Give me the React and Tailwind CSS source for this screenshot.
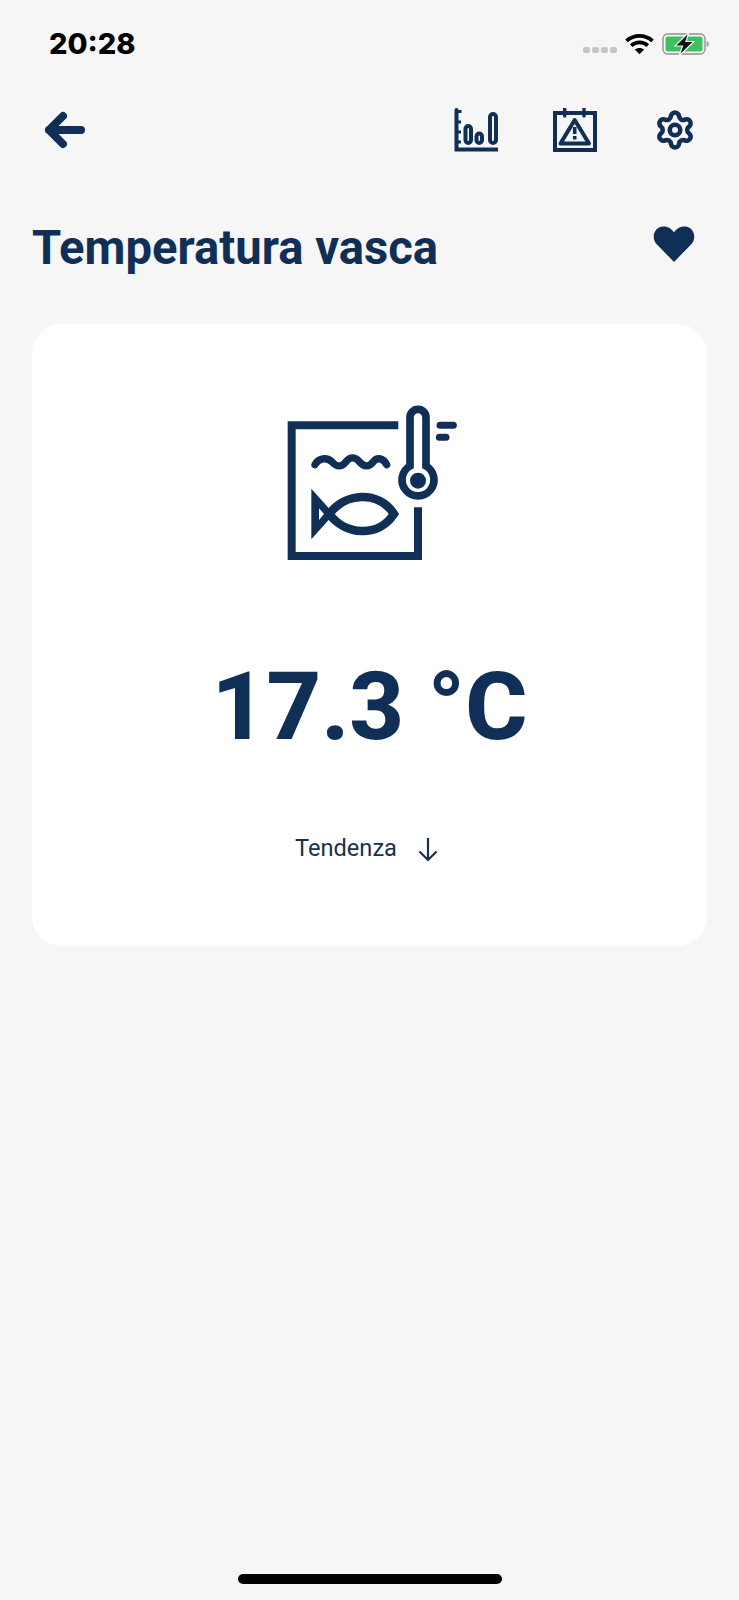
import { Settings } from 'lucide-react'

function Wifi() {
  return (
    <svg width="29" height="22" viewBox="0 0 28 21" fill="none" stroke="#000" strokeWidth="3.6">
      <path d="M1.5 7.5C8.5 1 19.5 1 26.5 7.5" />
      <path d="M6 12C10.5 8 17.5 8 22 12" />
      <path d="M14 20.5L9.5 15.8C12 13.8 16 13.8 18.5 15.8Z" fill="#000" stroke="none" />
    </svg>
  )
}

function Battery() {
  return (
    <svg width="48" height="24" viewBox="0 0 48 24" fill="none">
      <rect x="1" y="2" width="42" height="20" rx="5" stroke="#a9a9a9" strokeWidth="1.8" />
      <rect x="3.5" y="4.5" width="37" height="15" rx="2.5" fill="#3cc060" />
      <path d="M44.5 9C46.5 9.5 47 10.5 47 12S46.5 14.5 44.5 15Z" fill="#a9a9a9" />
      <path d="M27 0L13 14H20.5L17 24L32 9.5H24Z" fill="#111" stroke="#f6f6f6" strokeWidth="1.2" />
    </svg>
  )
}

function ChartIcon() {
  return (
    <svg width="44" height="44" viewBox="0 0 44 44" fill="none" stroke="#0f2f57" strokeWidth="4">
      <path d="M2.5 2V41.5H43" strokeWidth="4" strokeLinecap="round" />
      <path d="M3 3.5H7.5M3 14H7M3 24H7M3 34H7" strokeWidth="3" />
      <rect x="11.5" y="18" width="5.5" height="17" rx="2.7" />
      <rect x="22.5" y="25.5" width="5.5" height="9.5" rx="2.7" />
      <rect x="36" y="6" width="6" height="29" rx="3" />
    </svg>
  )
}

function AlertCalendarIcon() {
  return (
    <svg width="44" height="44" viewBox="0 0 44 44" fill="none" stroke="#0f2f57">
      <rect x="2" y="5" width="40" height="37" strokeWidth="4" />
      <path d="M11.7 0.5V8M31 0.5V8" strokeWidth="3.4" strokeLinecap="round" />
      <path d="M21.7 12L7.5 35.5H36Z" strokeWidth="4" strokeLinejoin="round" />
      <path d="M21.7 19V26" strokeWidth="3.6" />
      <path d="M21.7 28V31.5" strokeWidth="3.6" />
    </svg>
  )
}

function TankIcon() {
  return (
    <svg width="200" height="180" viewBox="0 0 600 540" fill="none" stroke="#0f2f57">
      <path d="M385 106H65V498H444V352" strokeWidth="24" />
      <path d="M420 228V82a24 24 0 0 1 48 0V228A48 48 0 1 1 420 228Z" strokeWidth="23" />
      <circle cx="444" cy="272" r="24" fill="#0f2f57" stroke="none" />
      <path d="M510 106H550" strokeWidth="21" strokeLinecap="round" />
      <path d="M508 142H528" strokeWidth="21" strokeLinecap="round" />
      <path d="M135 224C145 205 170 200 185 215C200 232 215 232 228 215C240 200 255 200 268 215C282 232 297 232 310 215C322 200 340 205 350 224" strokeWidth="22" strokeLinecap="round" />
      <path d="M178 372C225 308 325 300 372 372C325 444 225 436 178 372Z" strokeWidth="26" />
      <path fillRule="evenodd" d="M124 296L192 372L124 448ZM147 355V390L162 372Z" fill="#0f2f57" stroke="none" />
    </svg>
  )
}

export default function App() {
  return (
    <div className="min-h-[1600px] bg-[#f6f6f6] font-['Roboto',sans-serif] text-[#0f2f57] relative">
      {/* status bar */}
      <div className="h-[88px] pl-[49px] pr-[29px] flex items-center justify-between">
        <span className="font-['Inter',sans-serif] font-extrabold text-[29px] text-black">20:28</span>
        <div className="flex items-center">
          <div className="flex gap-[2px] mr-[8px] mt-[12px]">
            <span className="w-[7px] h-[6px] rounded-[2px] bg-[#c6c6c6]" />
            <span className="w-[7px] h-[6px] rounded-[2px] bg-[#c6c6c6]" />
            <span className="w-[7px] h-[6px] rounded-[2px] bg-[#c6c6c6]" />
            <span className="w-[7px] h-[6px] rounded-[2px] bg-[#c6c6c6]" />
          </div>
          <Wifi />
          <div className="ml-[8px]"><Battery /></div>
        </div>
      </div>

      {/* nav */}
      <div className="h-[48px] mt-[18px] pl-[41px] pr-[41px] flex items-center">
        <svg width="48" height="48" viewBox="0 0 48 48" fill="none" stroke="#0f2f57" strokeWidth="8" strokeLinecap="round" strokeLinejoin="round">
          <path d="M8 24H40M22 10L8 24L22 38" />
        </svg>
        <div className="ml-auto flex items-center">
          <ChartIcon />
          <div className="ml-[55px]"><AlertCalendarIcon /></div>
          <Settings size={42} strokeWidth={2.6} className="ml-[57px] mr-[2px]" />
        </div>
      </div>

      {/* title */}
      <div className="mt-[62px] pl-[32px] pr-[44px] h-[60px] flex items-center justify-between">
        <h1 className="mt-[5px] text-[47.2px] font-bold leading-none">Temperatura vasca</h1>
        <svg className="mb-[4px]" width="42" height="36" viewBox="0 0 42 36" fill="#0f2f57">
          <path d="M21 36L3.5 18C-2 12 1 1 10 .5C15 .2 19 3 21 6.5C23 3 27 .2 32 .5C41 1 44 12 38.5 18Z" />
        </svg>
      </div>

      {/* card */}
      <div className="mx-[32px] mt-[48px] h-[622px] bg-white rounded-[30px] flex flex-col items-center">
        <div className="mt-[66px]"><TankIcon /></div>
        <div className="mt-[89px] text-[95px] font-extrabold leading-none">17.3 °C</div>
        <div className="mt-[82px] mr-[4px] flex items-center text-[23.6px] leading-none text-[#1c2f4d]">
          <span>Tendenza</span>
          <svg className="ml-[19px]" width="24" height="26" viewBox="0 0 24 26" fill="none" stroke="#1c2f4d" strokeWidth="2.2">
            <path d="M12 2V24M3.5 15.5L12 24L20.5 15.5" />
          </svg>
        </div>
      </div>

      {/* home indicator */}
      <div className="absolute left-[238px] top-[1574px] w-[264px] h-[10px] rounded-full bg-black" />
    </div>
  )
}
